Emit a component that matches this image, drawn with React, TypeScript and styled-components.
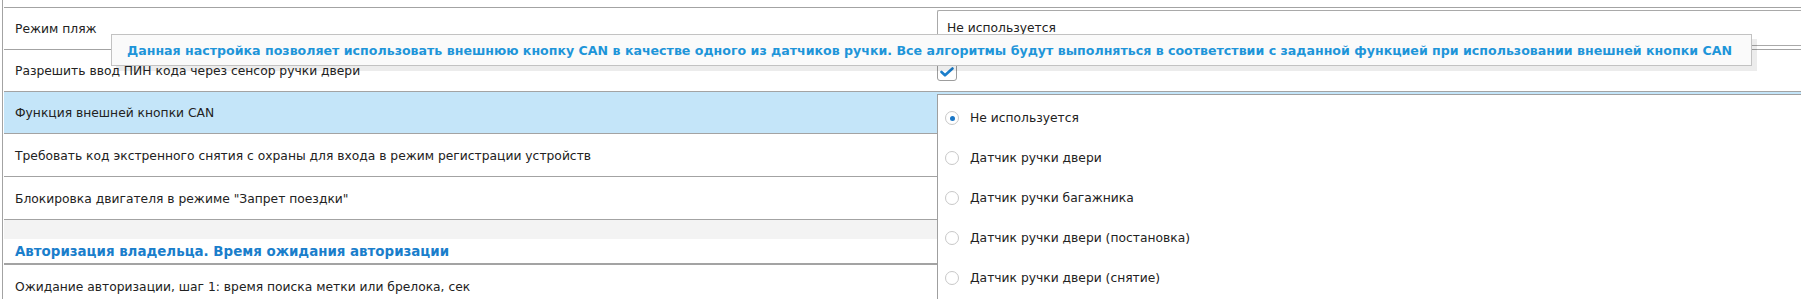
import React from "react";
import styled, { createGlobalStyle } from "styled-components";

const Global = createGlobalStyle`
  html, body { margin: 0; padding: 0; background: #ffffff; }
  body { font-family: "DejaVu Sans", Verdana, sans-serif; font-size: 12.3px; color: #222222; overflow: hidden; }
`;

const Page = styled.div`
  position: relative;
  margin-left: 2px;
  border-left: 1px solid #a3a3a3;
  padding-left: 1px;
  height: 299px;
  overflow: hidden;
`;

const TopStub = styled.div`
  height: 7px;
  border-bottom: 1px solid #a3a3a3;
`;

const Row = styled.div<{ $h: number; $active?: boolean }>`
  display: grid;
  grid-template-columns: 933px 1fr;
  height: ${(p) => p.$h}px;
  border-bottom: 1px solid #a3a3a3;
  background: ${(p) => (p.$active ? "#c4e5f9" : "#ffffff")};
`;

const Label = styled.div`
  display: flex;
  align-items: center;
  padding: 1px 0 0 11px;
  white-space: nowrap;
`;

const Control = styled.div`
  display: flex;
  align-items: center;
`;

const SelectBox = styled.div`
  box-sizing: border-box;
  width: 100%;
  height: 36px;
  margin-top: 2px;
  align-self: flex-start;
  border: 1px solid #a9a9a9;
  border-right: none;
  border-radius: 2px 0 0 2px;
  padding: 10px 0 0 9px;
  white-space: nowrap;
`;

const CheckBox = styled.div`
  box-sizing: border-box;
  width: 20px;
  height: 20px;
  margin-top: 1px;
  border: 1px solid #9d9d9d;
  border-radius: 3px;
  background: #ffffff;
  display: flex;
  align-items: flex-end;
  justify-content: center;
  padding-bottom: 3px;
`;

const Band = styled.div`
  height: 19px;
  background: #f3f3f3;
`;

const Heading = styled.div`
  height: 24px;
  border-bottom: 2px solid #a3a3a3;
  padding-left: 11px;
  display: flex;
  align-items: center;
  font-size: 13.4px;
  font-weight: bold;
  color: #1a7ecb;
  white-space: nowrap;
`;

const Tooltip = styled.div`
  position: absolute;
  left: 108px;
  top: 34px;
  width: 1641px;
  height: 32px;
  box-sizing: border-box;
  border: 1px solid #c2c2c2;
  background: #fafafa;
  box-shadow: 5px 5px 0 rgba(0, 0, 0, 0.075);
  padding: 0 15px;
  display: flex;
  align-items: center;
  font-size: 12.6px;
  font-weight: bold;
  color: #1e95d9;
  white-space: nowrap;
  z-index: 3;
`;

const Dropdown = styled.div`
  position: absolute;
  left: 934px;
  top: 94px;
  right: -10px;
  height: 240px;
  background: #ffffff;
  border: 1px solid #9f9f9f;
  padding-top: 3px;
  z-index: 2;
`;

const Option = styled.div`
  height: 40px;
  display: flex;
  align-items: center;
  padding-left: 7px;
  gap: 11px;
  white-space: nowrap;
`;

const Radio = styled.span<{ $on?: boolean }>`
  box-sizing: border-box;
  width: 14px;
  height: 14px;
  border-radius: 50%;
  border: 1px solid #c8c8c8;
  background: #ffffff;
  display: flex;
  align-items: center;
  justify-content: center;
  &::after {
    content: "";
    width: 5px;
    height: 5px;
    border-radius: 50%;
    background: ${(p) => (p.$on ? "#1a76c6" : "transparent")};
  }
`;

const options = [
  "Не используется",
  "Датчик ручки двери",
  "Датчик ручки багажника",
  "Датчик ручки двери (постановка)",
  "Датчик ручки двери (снятие)",
];

export default function App() {
  return (
    <>
      <Global />
      <Page>
        <TopStub />
        <Row $h={41}>
          <Label>Режим пляж</Label>
          <Control>
            <SelectBox>Не используется</SelectBox>
          </Control>
        </Row>
        <Row $h={41}>
          <Label>Разрешить ввод ПИН кода через сенсор ручки двери</Label>
          <Control>
            <CheckBox>
              <svg width="14" height="10" viewBox="0 0 14 10">
                <path d="M1.5 5 L5 8.3 L12.5 1.5" fill="none" stroke="#1a7ecb" strokeWidth="2.6" strokeLinecap="round" strokeLinejoin="round" />
              </svg>
            </CheckBox>
          </Control>
        </Row>
        <Row $h={41} $active>
          <Label>Функция внешней кнопки CAN</Label>
          <Control />
        </Row>
        <Row $h={42}>
          <Label>Требовать код экстренного снятия с охраны для входа в режим регистрации устройств</Label>
          <Control />
        </Row>
        <Row $h={42}>
          <Label>Блокировка двигателя в режиме "Запрет поездки"</Label>
          <Control />
        </Row>
        <Band />
        <Heading>Авторизация владельца. Время ожидания авторизации</Heading>
        <Row $h={42}>
          <Label>Ожидание авторизации, шаг 1: время поиска метки или брелока, сек</Label>
          <Control />
        </Row>
        <Tooltip>
          Данная настройка позволяет использовать внешнюю кнопку CAN в качестве одного из датчиков ручки. Все алгоритмы будут выполняться в соответствии с заданной функцией при использовании внешней кнопки CAN
        </Tooltip>
        <Dropdown>
          {options.map((o, i) => (
            <Option key={o}>
              <Radio $on={i === 0} />
              {o}
            </Option>
          ))}
        </Dropdown>
      </Page>
    </>
  );
}
